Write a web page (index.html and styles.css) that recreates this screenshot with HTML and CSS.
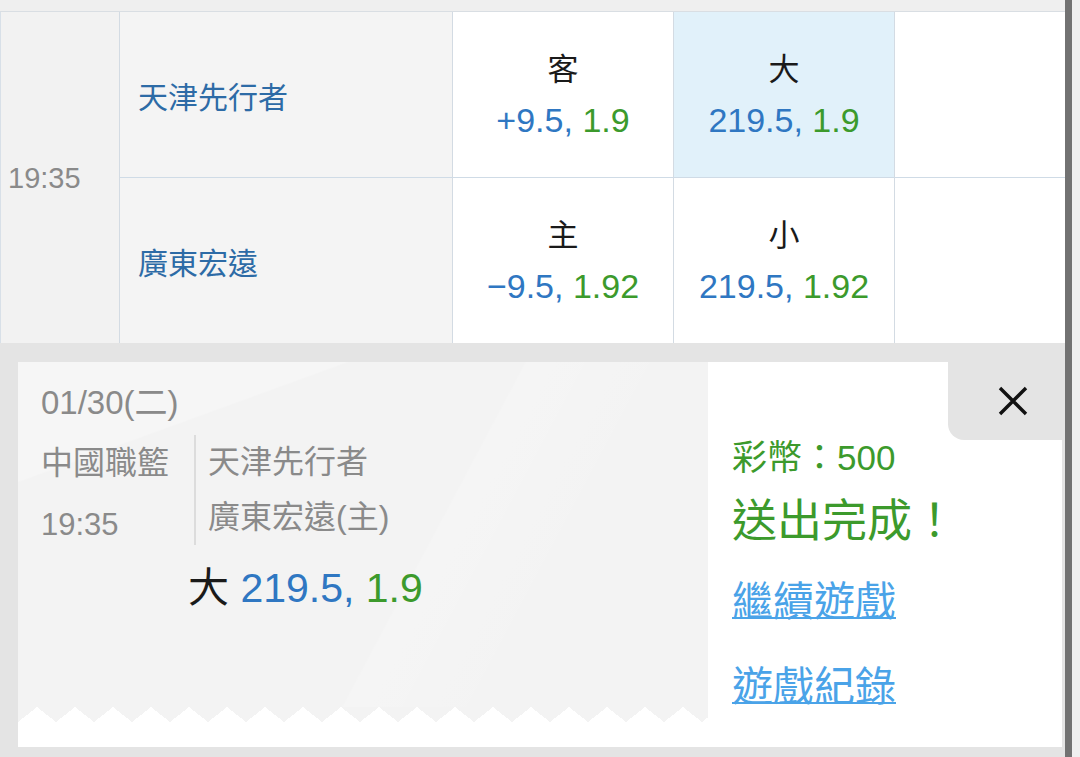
FILE: index.html
```html
<html>
  <head>
    <link rel="stylesheet" href="styles.css">
    <title>Bet ticket</title>
  </head>
<body>
  <div class="screen">
    <div class="main">
      <div class="top-strip"></div>

      <div class="odds-table">
        <div class="cell time-cell">19:35</div>

        <div class="cell team-cell">天津先行者</div>
        <div class="cell bet-cell">
          <div class="bet-label">客</div>
          <div class="bet-odds"><span class="line">+9.5,</span> <span class="price">1.9</span></div>
        </div>
        <div class="cell bet-cell picked">
          <div class="bet-label">大</div>
          <div class="bet-odds"><span class="line">219.5,</span> <span class="price">1.9</span></div>
        </div>
        <div class="cell empty-cell"></div>

        <div class="cell team-cell last-row">廣東宏遠</div>
        <div class="cell bet-cell last-row">
          <div class="bet-label">主</div>
          <div class="bet-odds"><span class="line">&minus;9.5,</span> <span class="price">1.92</span></div>
        </div>
        <div class="cell bet-cell last-row">
          <div class="bet-label">小</div>
          <div class="bet-odds"><span class="line">219.5,</span> <span class="price">1.92</span></div>
        </div>
        <div class="cell empty-cell last-row"></div>
      </div>

      <div class="overlay">
        <div class="ticket">
          <div class="ticket-left">
            <div class="ticket-body">
              <div class="ticket-date">01/30(二)</div>
              <div class="ticket-info">
                <div class="ticket-league">
                  <div>中國職籃</div>
                  <div class="ticket-time">19:35</div>
                </div>
                <div class="ticket-teams">
                  <div>天津先行者</div>
                  <div>廣東宏遠(主)</div>
                </div>
              </div>
              <div class="ticket-bet">大 <span class="line">219.5,</span> <span class="price">1.9</span></div>
            </div>
            <div class="ticket-edge"></div>
          </div>

          <div class="ticket-right">
            <button class="close-btn">
              <svg width="30" height="30" viewBox="0 0 30 30">
                <path d="M2 2 L28 28 M28 2 L2 28" stroke="#111" stroke-width="3.4" fill="none"/>
              </svg>
            </button>
            <div class="coins">彩幣：500</div>
            <div class="done">送出完成！</div>
            <a class="link first" href="#">繼續遊戲</a>
            <a class="link" href="#">遊戲紀錄</a>
          </div>
        </div>
      </div>
    </div>
    <div class="scrollbar"></div>
    <div class="edge"></div>
  </div>
</body>
</html>
```

FILE: styles.css
```css
html,
body {
  overflow: hidden;
}

body {
  margin: 0;
  font-family: "Liberation Sans", "Noto Sans CJK TC", sans-serif;
  background: #fff;
}

.screen {
  display: grid;
  grid-template-columns: 1065px 7px 8px;
  width: 1080px;
  height: 757px;
  overflow: hidden;
}

.main {
  display: flex;
  flex-direction: column;
  min-width: 0;
}

.scrollbar {
  background: #727272;
}

.edge {
  background: #efefef;
}

.top-strip {
  height: 11px;
  background: #efefef;
  border-bottom: 1px solid #d9dee3;
}

/* odds table */

.odds-table {
  display: grid;
  grid-template-columns: 120px 333px 221px 221px 1fr;
  grid-template-rows: 166px 165px;
}

.cell {
  box-sizing: border-box;
  border-right: 1px solid #d3dbe3;
  border-bottom: 1px solid #cfdbe6;
}

.cell.last-row {
  border-bottom: none;
}

.time-cell {
  grid-row: span 2;
  border-left: 1px solid #d8e0e8;
  border-bottom: none;
  background: #f2f2f2;
  color: #8a8a8a;
  font-size: 29px;
  display: flex;
  align-items: center;
  padding-left: 7px;
  padding-top: 2px;
}

.team-cell {
  background: #f4f4f4;
  color: #2d6ba6;
  font-size: 30px;
  display: flex;
  align-items: center;
  padding-left: 18px;
}

.bet-cell {
  display: flex;
  flex-direction: column;
  justify-content: center;
  align-items: center;
  background: #fff;
}

.bet-cell.picked {
  background: #e1f1fa;
}

.bet-label {
  font-size: 31px;
  line-height: 50px;
  color: #1a1a1a;
}

.bet-odds {
  font-size: 34px;
  line-height: 50px;
}

.line {
  color: #2f77c2;
}

.price {
  color: #3c9a2c;
}

.empty-cell {
  border-right: none;
  background: #fff;
}

/* confirmation overlay */

.overlay {
  flex: 1;
  background: #e4e4e4;
  padding: 19px 3px 10px 18px;
}

.ticket {
  display: flex;
  height: 385px;
  background: #fff;
}

.ticket-left {
  width: 690px;
}

.ticket-body {
  height: 345px;
  box-sizing: border-box;
  padding: 23px 0 0 23px;
  color: #8a8a8a;
  background:
    linear-gradient(118deg, rgba(255,255,255,0) 58%, rgba(255,255,255,.2) 58.3%, rgba(255,255,255,0) 76%),
    linear-gradient(160deg, rgba(255,255,255,.25) 20%, rgba(255,255,255,0) 20.3%),
    #f3f3f3;
}

.ticket-edge {
  height: 15px;
  background:
    conic-gradient(from 128.3deg at 50% 0, #fff 103.4deg, rgba(255,255,255,0) 0) 0 0 / 38px 15px repeat-x,
    #f3f3f3;
}

.ticket-date {
  font-size: 33px;
  line-height: 36px;
}

.ticket-info {
  display: flex;
  margin-top: 14px;
  height: 110px;
  font-size: 32px;
}

.ticket-league {
  width: 153px;
  border-right: 2px solid #dcdcdc;
  line-height: 56px;
}

.ticket-time {
  padding-top: 6px;
  font-size: 31px;
}

.ticket-teams {
  padding-left: 12px;
  line-height: 55px;
}

.ticket-bet {
  margin-top: 18px;
  padding-left: 147px;
  font-size: 41px;
  line-height: 50px;
  color: #1a1a1a;
}

.ticket-right {
  flex: 1;
  position: relative;
  padding: 76px 0 0 24px;
  display: flex;
  flex-direction: column;
  align-items: flex-start;
}

.close-btn {
  position: absolute;
  top: 0;
  right: 0;
  width: 114px;
  height: 78px;
  border: none;
  background: #e4e4e4;
  border-bottom-left-radius: 16px;
  padding: 0 0 0 16px;
  display: flex;
  align-items: center;
  justify-content: center;
}

.coins {
  color: #3c9a2c;
  font-size: 35px;
  line-height: 40px;
}

.done {
  margin-top: 18px;
  color: #3c9a2c;
  font-size: 45px;
  line-height: 52px;
}

.link {
  margin-top: 35px;
  color: #4aa3e8;
  font-size: 41px;
  line-height: 50px;
  text-decoration: underline;
  text-decoration-thickness: 2px;
}

.link.first {
  margin-top: 29px;
}
```
